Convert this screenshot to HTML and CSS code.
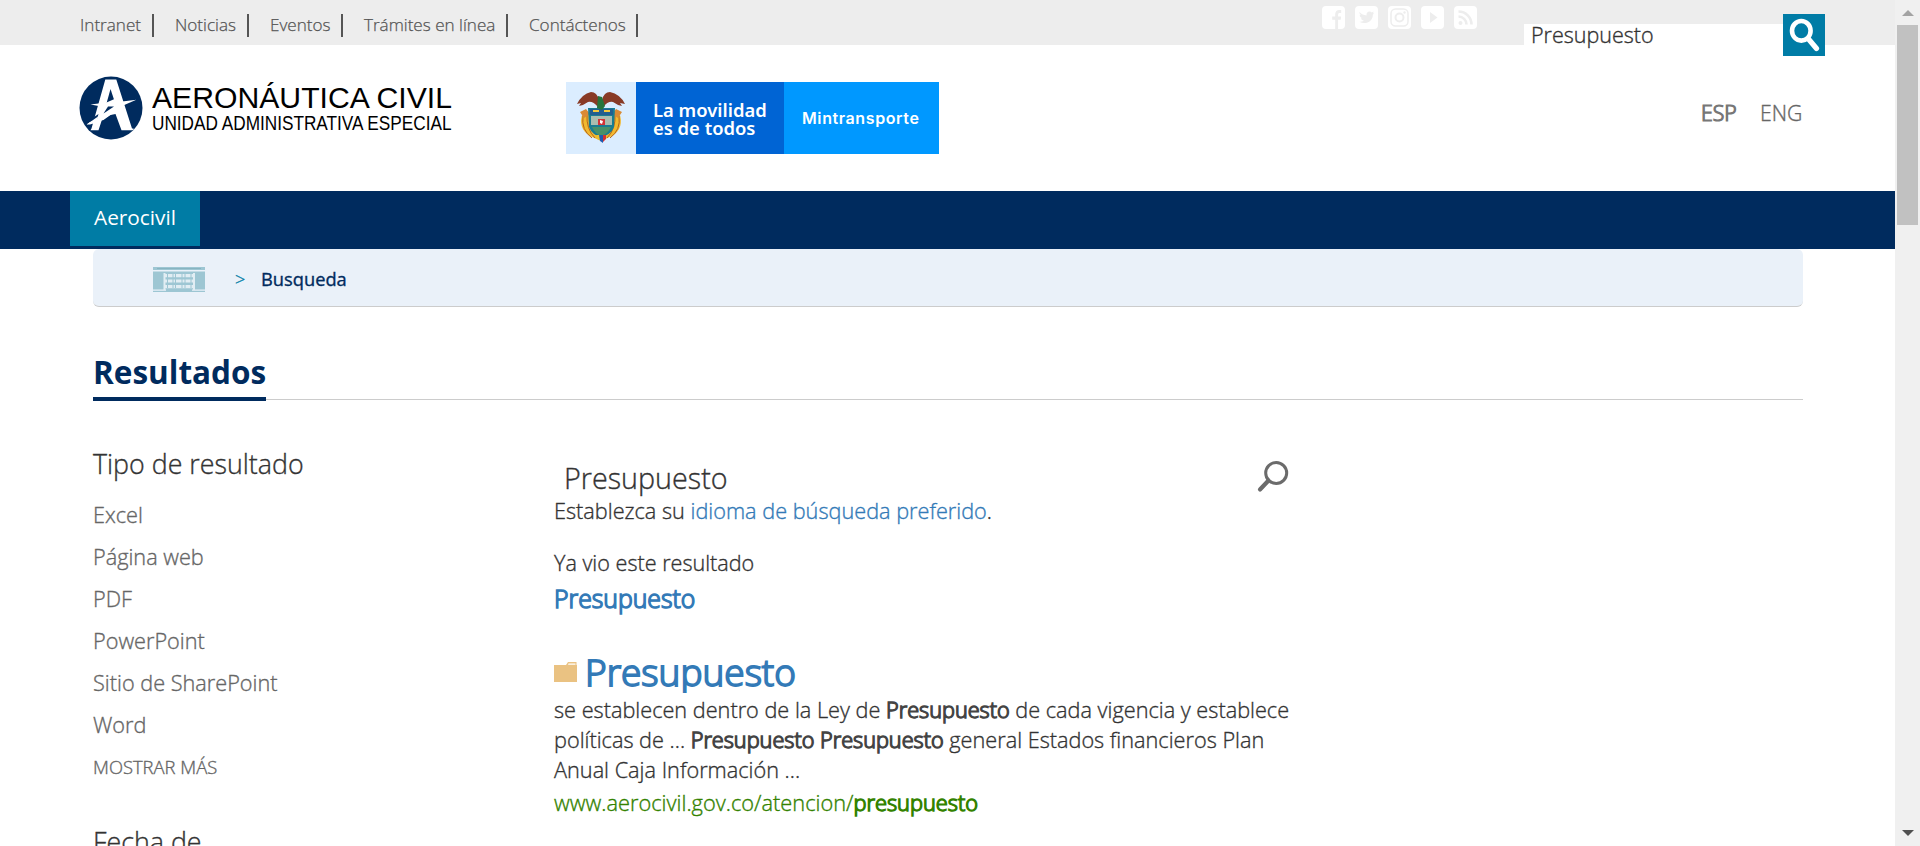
FILE: index.html
```html
<!DOCTYPE html>
<html lang="es">
<head>
<meta charset="utf-8">
<title>Resultados - Aerocivil</title>
<link rel="stylesheet" href="styles.css">
</head>
<body>
<div class="window">
<div class="page">
  <header class="topbar">
    <nav class="toplinks">
      <a class="l1">Intranet</a><a class="l2">Noticias</a><a class="l3">Eventos</a><a class="l4">Trámites en línea</a><a class="l5">Contáctenos</a>
    </nav>
    <div class="social">
      <svg viewBox="0 0 23 23"><rect width="23" height="23" rx="4" fill="#fff"/><path d="M13.2 23v-9.300h-3V10.400h3V8.200c0-2.700 1.600-4.200 4-4.200h2v3h-1.600c-1.100 0-1.500.6-1.500 1.500v1.900h3l-.4 3.300h-2.600V23z" fill="#ededed"/></svg>
      <svg viewBox="0 0 23 23"><rect width="23" height="23" rx="4" fill="#fff"/><path d="M4.500 6c2 2.300 4.200 3.200 7 3.400-.6-4 3.600-5 5.300-3l2-.8-1 1.900 1.500-.3-1.500 1.600c.3 6.500-7 10.500-13.500 7 2 0 3.500-.4 4.500-1.400-1.700-.2-2.500-1-2.900-2.200h1.300C5.400 11.300 4.700 10.300 4.700 8.700l1.400.4C4.500 8 4.200 7 4.500 6z" fill="#ededed"/></svg>
      <svg viewBox="0 0 23 23"><rect width="23" height="23" rx="4" fill="#fff"/><g fill="none" stroke="#ededed" stroke-width="1.500"><rect x="3" y="3" width="17" height="17" rx="4.500"/><circle cx="11.500" cy="11.500" r="4" stroke-width="2"/></g><circle cx="16.500" cy="6.500" r="1.200" fill="#ededed"/></svg>
      <svg viewBox="0 0 23 23"><rect width="23" height="23" rx="4" fill="#fff"/><path d="M9 6v11l7.500-5.500z" fill="#ededed"/></svg>
      <svg viewBox="0 0 23 23"><rect width="23" height="23" rx="4" fill="#fff"/><circle cx="6.500" cy="17" r="2" fill="#ededed"/><path d="M4.500 10.500a8 8 0 0 1 8 8M4.500 5.500a13 13 0 0 1 13 13" fill="none" stroke="#ededed" stroke-width="2.600"/></svg>
    </div>
    <div class="search">
      <div class="field">Presupuesto</div>
      <div class="go"><svg viewBox="0 0 42 42"><ellipse cx="18.300" cy="16.800" rx="9.300" ry="9.800" fill="none" stroke="#fff" stroke-width="4.600"/><path d="M25.500 25l8 9.500" stroke="#fff" stroke-width="5.200" stroke-linecap="round"/></svg></div>
    </div>
  </header>

  <div class="brand">
    <svg class="emblem" viewBox="0 0 64 64"><circle cx="32" cy="32" r="31.500" fill="#002b5e"/><path d="M26.300 3.500h11L53 52.500h1.500v1.700H42.500L36.500 38 24 40.500 19.500 54.200H11.500L12.500 52.500z" fill="#fff"/><path d="M31.500 13L27.500 27.500 35.300 24.500z" fill="#002b5e"/><path d="M11.500 28.500l16-2 8-3.500 3.500 3 18.300-2.300L43 30l-4.500 4L24.500 44 7.700 48.500C15 43 21 38 25 31z" fill="#fff"/><path d="M24.500 37.500L35 30.500l-6 0z" fill="#002b5e"/><path d="M6 47l13.500-9-1.800 6.200z" fill="#002b5e"/><path d="M7.700 48.500L19 40.500l-1 6-7 2z" fill="#fff"/></svg>
    <div class="wordmark"><div class="w1">AERONÁUTICA CIVIL</div><div class="w2">UNIDAD ADMINISTRATIVA ESPECIAL</div></div>
    <div class="gov">
      <div class="crest"><svg viewBox="0 0 70 71"><path d="M17 30q-6 16 7 24l11 5 11-5q13-8 7-24l-6 3H23z" fill="#f2b92f"/><path d="M17 34q-2 14 9 22M53 34q2 14-9 22M21 32q-1 15 8 24M49 32q1 15-8 24" stroke="#b5651b" stroke-width="1" fill="none"/><path d="M14 30l6-3 4 5-6 4zM56 30l-6-3-4 5 6 4z" fill="#d98a35"/><path d="M22 26h27l-1 19q-3 8-13 10-9-2-12-10z" fill="#197c92"/><path d="M24 27h23v6H24z" fill="#215e91"/><path d="M25 34h21v9H25z" fill="#a9bdb0"/><path d="M26 45h19q-3 7-10 9-6-2-9-9z" fill="#489068"/><path d="M27 28h6v2h-6zM38 28h6v2h-6z" fill="#f3c93e"/><path d="M32 37h7v6h-7z" fill="#d23238"/><path d="M34 38l3 1-1 3-2-1z" fill="#fff"/><path d="M11 22q5-10 14-12 6 0 8 8l-1 7q-5-6-10-5-4 3-9 4l2-3zM59 22q-5-10-15-12-6 0-8 8l1 7q5-6 10-5 4 3 9 4l-2-3z" fill="#883a26"/><path d="M32 14l4 1 3 9-3 4-5-2z" fill="#26743c"/><path d="M30 53h4v5l-3-1z" fill="#e9c02e"/><path d="M33 53h4v8l-3-2z" fill="#205bb0"/><path d="M37 53h3v4l-3 3z" fill="#d23232"/></svg></div>
      <div class="slogan">La movilidad<br>es de todos</div>
      <div class="ministry">Mintransporte</div>
    </div>
    <div class="lang"><span class="esp">ESP</span><span class="eng">ENG</span></div>
  </div>

  <nav class="mainnav"><a class="tab">Aerocivil</a></nav>

  <div class="content">
    <div class="crumbs">
      <svg class="home" viewBox="0 0 52 25"><rect width="52" height="25" fill="#9dc6d3"/><path d="M0 3h52v1.500H0zM0 22.500h13v1.200H0zM39 22.500h13v1.200H39z" fill="#eaf1f9"/><path d="M12 7h29v3.200H12zM12 12.500h29v3H12zM12 18h29v3.200H12zM10.500 6h2v17h-2zM40 6h2v17h-2z" fill="#e1edf3"/><path d="M14.500 6v15M20 6v15M22.500 6v15M29 6v15M32 6v15M38 6v15" stroke="#9dc6d3"/><path d="M4 1v1h44v-1" fill="#87b4c1"/></svg>
      <span class="gt">&gt;</span><span class="here">Busqueda</span>
    </div>
    <div class="heading"><h1>Resultados</h1></div>
    <div class="columns">
      <aside>
        <h2 class="tipo">Tipo de resultado</h2>
        <ul><li>Excel</li><li>Página web</li><li>PDF</li><li>PowerPoint</li><li>Sitio de SharePoint</li><li>Word</li><li class="more">MOSTRAR MÁS</li></ul>
        <h2 class="fecha">Fecha de</h2>
      </aside>
      <main>
        <div class="query"><span>Presupuesto</span><svg viewBox="0 0 32 32"><circle cx="19.200" cy="12" r="10.500" fill="none" stroke="#6b6b6b" stroke-width="3"/><path d="M11.500 19.500L3 28.500" stroke="#6b6b6b" stroke-width="4.200" stroke-linecap="round"/></svg></div>
        <p class="pref">Establezca su <a>idioma de búsqueda preferido</a>.</p>
        <p class="seen">Ya vio este resultado</p>
        <a class="seenlink">Presupuesto</a>
        <div class="result"><svg viewBox="0 0 23 20"><path d="M0 3h12l2-3h8.500v3h.5v17H0z" fill="#eac282"/><path d="M14.500 1.500H21.500v1.200h-7.500z" fill="#fff"/></svg><a>Presupuesto</a></div>
        <p class="snippet">se establecen dentro de la Ley de <b>Presupuesto</b> de cada vigencia y establece<br>políticas de ... <b>Presupuesto</b> <b>Presupuesto</b> general Estados financieros Plan<br>Anual Caja Información ...</p>
        <p class="url">www.aerocivil.gov.co/atencion/<b>presupuesto</b></p>
      </main>
    </div>
  </div>
</div>
<div class="scrollbar"><i class="up"></i><div class="thumb"></div><i class="down"></i></div>
</div>
</body>
</html>
```
FILE: styles.css
```css
* { box-sizing: border-box; margin: 0; padding: 0; }
body { background: #fff; font-family: "Open Sans", sans-serif; font-weight: 300; color: #333; overflow: hidden; -webkit-text-stroke: .35px currentColor; }
svg { display: block; flex: none; }
.window { display: flex; width: 1920px; height: 846px; overflow: hidden; }
.page { width: 1895px; height: 846px; overflow: hidden; white-space: nowrap; }

.topbar { height: 45px; background: #ededed; display: flex; }
.toplinks { display: flex; padding: 14px 0 0 80px; width: 1322px; }
.toplinks a { height: 23px; line-height: 22px; font-size: 17.1px; color: #555; border-right: 2px solid #555; -webkit-text-stroke-width: .25px; }
.l1 { width: 74px; }
.l2, .l3, .l4, .l5 { padding-left: 21px; }
.l2 { width: 95px; }
.l3 { width: 94px; }
.l4 { width: 165px; }
.l5 { width: 130px; }
.social { display: flex; gap: 10px; padding-top: 6px; width: 202px; }
.social svg { width: 23px; height: 23px; }
.search { display: flex; height: 56px; }
.field { width: 259px; height: 32px; margin-top: 24px; padding-left: 7px; background: #fff; font-size: 21.5px; line-height: 22px; color: #333; }
.go { width: 42px; height: 42px; margin-top: 14px; background: #007ca6; }

.brand { height: 146px; display: flex; padding-left: 79px; }
.emblem { width: 64px; height: 64px; margin-top: 31px; }
.wordmark { width: 423px; padding: 34px 0 0 9px; font-family: "Liberation Sans", Arial, sans-serif; font-weight: 400; color: #000; -webkit-text-stroke: 0; }
.w1 { font-size: 29px; line-height: 38px; transform: scaleX(1.04); }
.w2 { font-size: 20px; line-height: 12px; transform: scaleX(.86); }
.wordmark div { transform-origin: 0 50%; width: max-content; }
.gov { display: flex; width: 373px; height: 72px; margin-top: 37px; color: #fff; -webkit-text-stroke: 0; }
.crest { width: 70px; background: #dbedff; }
.slogan { width: 148px; background: #0064d4; padding: 19px 0 0 17px; font: 600 18.4px/18px "Noto Sans", sans-serif; }
.ministry { width: 155px; background: #0098ff; padding-left: 18px; font: 600 16px/72px Inter, sans-serif; letter-spacing: .6px; }
.lang { display: flex; margin-left: 762px; padding-top: 53px; font-size: 21.2px; line-height: 30px; color: #666; }
.esp { width: 59px; -webkit-text-stroke: 1.2px #777; }

.mainnav { height: 58px; background: #002b5e; padding-left: 70px; -webkit-text-stroke: 0; }
.tab { display: block; width: 130px; height: 55px; padding-left: 24px; background: #007ca5; color: #fff; font-size: 20.8px; line-height: 53px; font-weight: 400; }

.content { padding-left: 93px; width: 1803px; }
.crumbs { display: flex; height: 58px; padding: 18px 0 0 60px; background: #eaf1f9; border-bottom: 1px solid #ccc; border-radius: 6px; line-height: 24px; font-size: 18px; color: #002b5e; }
.home { width: 52px; height: 25px; }
.gt { margin-left: 30px; width: 26px; color: #007ca6; }
.here { font-weight: 400; font-size: 18.3px; }
.heading { height: 94px; padding-top: 41px; background: linear-gradient(#ccc, #ccc) 0 92px / 100% 1px no-repeat; }
h1 { display: block; width: 173px; height: 53px; border-bottom: 4px solid #002b5e; color: #002b5e; font-size: 31.5px; line-height: 47px; font-weight: 700; -webkit-text-stroke: 0; }
.columns { display: flex; padding-top: 42px; }
aside { width: 461px; color: #666; }
h2 { font-size: 26.8px; line-height: 42px; font-weight: 300; color: #333; }
ul { list-style: none; padding-top: 9px; }
li { font-size: 21.7px; line-height: 42px; }
.more { font-size: 18.4px; }
.fecha { padding-top: 33px; }
.query { display: flex; justify-content: space-between; width: 735px; height: 48px; padding: 15px 0 0 10px; font-size: 28.7px; line-height: 39px; color: #333; }
.query svg { width: 32px; height: 32px; margin-top: 3px; }
.pref { font-size: 21.7px; line-height: 30px; padding-top: 5px; }
a { color: #337ab7; }
.seen { font-size: 21.6px; line-height: 30px; padding-top: 22px; }
.seenlink { display: block; font-size: 24.8px; line-height: 40px; -webkit-text-stroke: 1.4px #337ab7; }
.result { display: flex; margin-top: 30px; height: 54px; font-size: 37px; line-height: 48px; }
.result svg { width: 23px; height: 20px; margin: 14px 8px 0 0; }
.result a { height: 45px; overflow: hidden; -webkit-text-stroke: 1.8px #337ab7; }
.snippet { font-size: 21.7px; line-height: 30px; margin-top: -7px; }
b { font-weight: 300; color: #444; -webkit-text-stroke: 1.3px currentColor; }
.url { font-size: 21.8px; line-height: 30px; margin-top: 3px; color: #338200; }
.url b { color: inherit; }

.scrollbar { width: 25px; height: 846px; background: #f0f0f0; display: flex; flex-direction: column; align-items: center; }
.up { border: 6px solid transparent; border-top: 0; border-bottom: 6px solid #a3a3a3; margin-top: 10px; }
.thumb { width: 21px; height: 200px; margin-top: 9px; background: #c1c1c1; }
.down { border: 6px solid transparent; border-bottom: 0; border-top: 6px solid #505050; margin: auto 0 10px; }
```
